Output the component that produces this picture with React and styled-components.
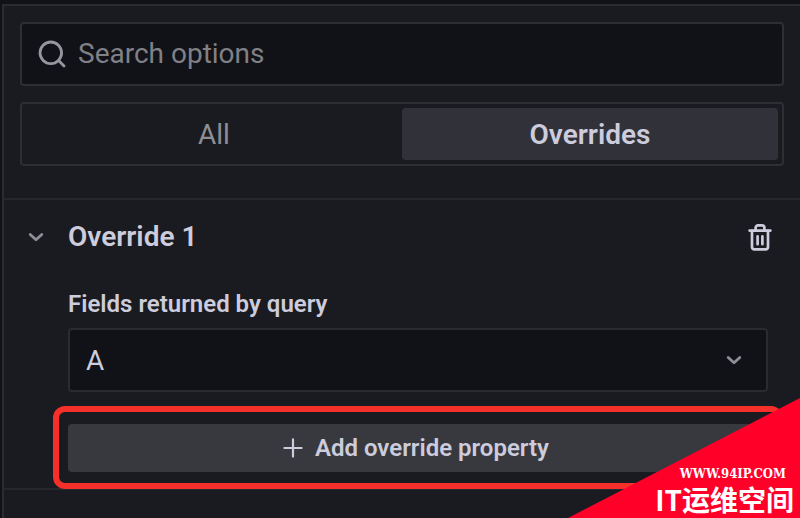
import React, { useState } from 'react'
import styled, { createGlobalStyle } from 'styled-components'

const GlobalStyle = createGlobalStyle`
*{
    box-sizing: border-box;
}

body{
    margin: 0;
    background: #111217;
    color: #ccccdc;
    font-family: Roboto, "Liberation Sans", sans-serif;
}

input, select, button{
    font-family: inherit;
    color: inherit;
}
`

function SearchIcon() {
    return (
        <svg width="28" height="28" viewBox="0 0 28 28" fill="none" stroke="currentColor" strokeWidth="2.8" strokeLinecap="round" aria-hidden="true">
            <circle cx="12.8" cy="12.8" r="10.8" />
            <path d="M20.6 20.6 L26 26" />
        </svg>
    )
}

function ChevronIcon() {
    return (
        <svg width="16" height="10" viewBox="0 0 16 10" fill="none" stroke="currentColor" strokeWidth="2.8" strokeLinecap="round" strokeLinejoin="round" aria-hidden="true">
            <path d="M2.2 2.4 L8 7.8 L13.8 2.4" />
        </svg>
    )
}

function TrashIcon() {
    return (
        <svg width="24" height="28" viewBox="0 0 24 28" fill="none" stroke="currentColor" strokeWidth="2.7" strokeLinecap="round" strokeLinejoin="round" aria-hidden="true">
            <path d="M1.6 7.6 H22.4" />
            <path d="M7.6 7.2 V4.8 a2.4 2.4 0 0 1 2.4 -2.4 h4 a2.4 2.4 0 0 1 2.4 2.4 V7.2" />
            <path d="M4 7.8 V24 a2.4 2.4 0 0 0 2.4 2.4 h11.2 a2.4 2.4 0 0 0 2.4 -2.4 V7.8" />
            <path d="M9.6 13.4 V21.2 M14.4 13.4 V21.2" />
        </svg>
    )
}

function PlusIcon() {
    return (
        <svg width="20" height="20" viewBox="0 0 20 20" fill="none" stroke="currentColor" strokeWidth="2.2" strokeLinecap="round" aria-hidden="true">
            <path d="M10 1.4 V18.6 M1.4 10 H18.6" />
        </svg>
    )
}

const tabs = ['All', 'Overrides']

export default function App() {
    const [tab, setTab] = useState('Overrides')
    const [query, setQuery] = useState('')
    const [open, setOpen] = useState(true)

    return (
        <Page>
            <GlobalStyle />
            <Pane>
                <Filters>
                    <SearchBox>
                        <SearchIcon />
                        <input
                            type="text"
                            aria-label="Search options"
                            placeholder="Search options"
                            value={query}
                            onChange={e => setQuery(e.target.value)}
                        />
                    </SearchBox>
                    <RadioGroup role="radiogroup" aria-label="Options shown">
                        {tabs.map(name => (
                            <RadioLabel key={name} $active={tab === name}>
                                <input
                                    type="radio"
                                    name="options"
                                    checked={tab === name}
                                    onChange={() => setTab(name)}
                                />
                                {name}
                            </RadioLabel>
                        ))}
                    </RadioGroup>
                </Filters>

                <Override>
                    <OverrideHeader>
                        <IconButton
                            type="button"
                            $muted
                            aria-label="Toggle override"
                            aria-expanded={open}
                            onClick={() => setOpen(!open)}
                        >
                            <ChevronIcon />
                        </IconButton>
                        <h2>Override 1</h2>
                        <IconButton type="button" aria-label="Remove override">
                            <TrashIcon />
                        </IconButton>
                    </OverrideHeader>
                    {open && (
                        <OverrideBody>
                            <FieldLabel htmlFor="query">Fields returned by query</FieldLabel>
                            <SelectBox>
                                <select id="query" defaultValue="A">
                                    <option>A</option>
                                </select>
                                <ChevronIcon />
                            </SelectBox>
                            <Highlight>
                                <AddButton type="button">
                                    <PlusIcon />
                                    Add override property
                                </AddButton>
                            </Highlight>
                        </OverrideBody>
                    )}
                </Override>
            </Pane>
            <CornerBadge>
                <SiteUrl>WWW.94IP.COM</SiteUrl>
                <SiteName>IT运维空间</SiteName>
            </CornerBadge>
        </Page>
    )
}

const Page = styled.div`
display: flex;
min-height: 100vh;
padding: 4px 0 0 2px;
`

const Pane = styled.main`
flex: 1;
min-width: 0;
background: #1a1b20;
border-top: 2px solid #2a2b2f;
border-left: 2px solid #2a2b2f;
`

const Filters = styled.div`
display: flex;
flex-direction: column;
gap: 16px;
padding: 16px 16px 32px;
`

const SearchBox = styled.div`
display: flex;
align-items: center;
gap: 12px;
height: 64px;
padding: 0 16px;
background: #111217;
border: 2px solid #2e2f33;
border-radius: 4px;
color: #96969f;

input{
    flex: 1;
    min-width: 0;
    padding: 0;
    border: 0;
    outline: 0;
    background: transparent;
    color: #ccccdc;
    font-size: 28px;
    line-height: 36px;
}

input::placeholder{
    color: #808087;
    opacity: 1;
}
`

const RadioGroup = styled.div`
display: flex;
height: 64px;
padding: 4px;
border: 2px solid #2e2f33;
border-radius: 4px;
`

const RadioLabel = styled.label`
flex: 1;
display: flex;
align-items: center;
justify-content: center;
border-radius: 4px;
background: ${props => (props.$active ? '#313239' : 'transparent')};
color: ${props => (props.$active ? '#ccccdc' : '#8e8e96')};
font-size: 28px;
font-weight: ${props => (props.$active ? 600 : 400)};
cursor: pointer;

input{
    position: absolute;
    opacity: 0;
    pointer-events: none;
}
`

const Override = styled.section`
border-top: 2px solid #26272c;
border-bottom: 2px solid #26272c;
`

const OverrideHeader = styled.header`
display: flex;
align-items: center;
height: 74px;
padding: 0 28px 0 24px;

h2{
    flex: 1;
    margin: 0 0 0 24px;
    font-size: 28px;
    line-height: 36px;
    font-weight: 600;
}
`

const IconButton = styled.button`
display: flex;
padding: 0;
border: 0;
background: transparent;
color: ${props => (props.$muted ? '#8e8e96' : '#ccccdc')};
cursor: pointer;
`

const OverrideBody = styled.div`
display: flex;
flex-direction: column;
padding: 14px 32px 0 64px;
`

const FieldLabel = styled.label`
margin-bottom: 8px;
font-size: 24px;
line-height: 32px;
font-weight: 600;
`

const SelectBox = styled.div`
display: grid;
align-items: center;
height: 64px;
background: #111217;
border: 2px solid #2a2b30;
border-radius: 4px;

select, svg{
    grid-area: 1 / 1;
}

select{
    width: 100%;
    height: 100%;
    padding: 0 16px;
    border: 0;
    outline: 0;
    appearance: none;
    background: transparent;
    font-size: 28px;
}

svg{
    justify-self: end;
    margin-right: 24px;
    color: #8e8e96;
    pointer-events: none;
}
`

const Highlight = styled.div`
position: relative;
margin: 14px -15px -1px;
padding: 12px 9px 11px;
border: 6px solid #f5302a;
border-radius: 12px;
`

const AddButton = styled.button`
display: flex;
align-items: center;
justify-content: center;
gap: 12px;
width: 100%;
height: 48px;
padding: 0 4px 0 0;
border: 0;
border-radius: 4px;
background: #38393f;
font-size: 24px;
font-weight: 600;
cursor: pointer;
`

const CornerBadge = styled.aside`
position: fixed;
right: 0;
bottom: 0;
display: flex;
flex-direction: column;
align-items: flex-end;
justify-content: flex-end;
width: 232px;
height: 120px;
padding: 0 6px 2px 0;
background: #ff0029;
color: #fff;
clip-path: polygon(100% 0, 100% 100%, 0 100%);
`

const SiteUrl = styled.span`
margin-right: 8px;
font-family: "DejaVu Serif Condensed", "DejaVu Serif", serif;
font-size: 13px;
line-height: 16px;
font-weight: 700;
`

const SiteName = styled.span`
font-family: "Noto Sans CJK SC", sans-serif;
font-size: 28px;
line-height: 34px;
font-weight: 700;
`
